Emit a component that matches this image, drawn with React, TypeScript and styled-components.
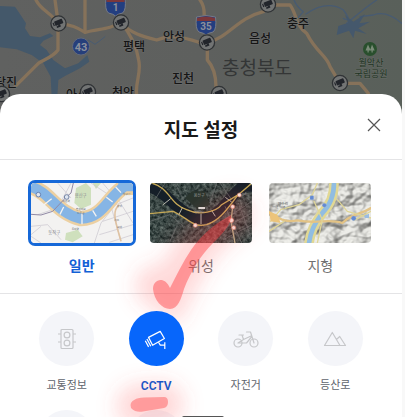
import React, { useState } from "react";
import styled, { createGlobalStyle, css } from "styled-components";

const GlobalStyle = createGlobalStyle`
  * { box-sizing: border-box; }
  html, body, #root { height: 100%; }
  body {
    margin: 0;
    overflow: hidden;
    background: #f8f8f8;
    font-family: Roboto, "Noto Sans CJK KR", sans-serif;
    color: #1a1a1a;
  }
`;

const Screen = styled.main`
  position: relative;
  height: 100%;
  overflow: hidden;
  padding-right: 3px;
`;

const MapArea = styled.div`
  height: 122px;
  background: #5e605f;
  overflow: hidden;

  svg {
    display: block;
    width: 100%;
    height: 100%;
  }
`;

const Sheet = styled.section`
  position: relative;
  min-height: 100%;
  margin-top: -28px;
  background: #fff;
  border-radius: 20px 20px 0 0;
`;

const SheetHeader = styled.header`
  display: grid;
  grid-template-columns: 1fr auto 1fr;
  padding: 19px 16px 14px;
  border-bottom: 1px solid #e4e4e6;
`;

const Title = styled.h1`
  grid-column: 2;
  align-self: end;
  margin: 4px 0 0;
  font-size: 19px;
  line-height: 28px;
  font-weight: 700;
`;

const CloseButton = styled.button`
  justify-self: end;
  width: 24px;
  height: 24px;
  padding: 0;
  border: 0;
  background: none;
  cursor: pointer;

  svg { display: block; }
`;

const ModeGroup = styled.div`
  display: grid;
  grid-template-columns: repeat(3, 1fr);
  padding: 23px 22px 17px;
  border-bottom: 1px solid #e4e4e6;
`;

const HiddenRadio = styled.input`
  position: absolute;
  opacity: 0;
  pointer-events: none;
`;

const ModeOption = styled.label<{ $active: boolean }>`
  display: flex;
  flex-direction: column;
  align-items: center;
  gap: 13px;
  font-size: 14px;
  line-height: 20px;
  font-weight: ${(p) => (p.$active ? 700 : 400)};
  color: ${(p) => (p.$active ? "#1261d6" : "#707070")};
  cursor: pointer;
`;

const Thumb = styled.span<{ $active: boolean }>`
  width: 102px;
  height: 60px;
  border-radius: 4px;
  overflow: hidden;
  ${(p) => p.$active && css`box-shadow: 0 0 0 3px #1668d8;`}

  svg {
    display: block;
    width: 100%;
    height: 100%;
  }
`;

const LayerGrid = styled.div`
  display: grid;
  grid-template-columns: repeat(4, 1fr);
  row-gap: 15px;
  padding: 17px 22px;
`;

const LayerButton = styled.button<{ $active: boolean }>`
  display: flex;
  flex-direction: column;
  align-items: center;
  gap: 11px;
  padding: 0;
  border: 0;
  background: none;
  font-family: inherit;
  font-size: ${(p) => (p.$active ? 12 : 11)}px;
  line-height: 18px;
  font-weight: ${(p) => (p.$active ? 600 : 400)};
  color: ${(p) => (p.$active ? "#1c55c4" : "#5f656d")};
  cursor: pointer;
  ${(p) => p.$active && css`position: relative; z-index: 3;`}
`;

const LayerCircle = styled.span<{ $active: boolean }>`
  display: grid;
  place-items: center;
  width: 55px;
  height: 55px;
  border-radius: 50%;
  background: ${(p) => (p.$active ? "#0766fb" : "#f4f5f9")};
  color: ${(p) => (p.$active ? "#fff" : "#c6c7ca")};
`;

const MarkerOverlay = styled.svg`
  position: absolute;
  top: 66px;
  left: 0;
  z-index: 2;
  pointer-events: none;
`;

const HomeIndicator = styled.div`
  position: absolute;
  z-index: 4;
  bottom: -3px;
  left: 50%;
  width: 42px;
  height: 4px;
  border-radius: 2px;
  background: #555;
  transform: translateX(-50%);
`;

const CameraPin = ({ x, y }: { x: number; y: number }) => (
  <g transform={`translate(${x} ${y})`}>
    <circle r="7.6" fill="#727474" stroke="#303336" strokeWidth="1.3" />
    <g transform="rotate(-22)" fill="#22252b">
      <rect x="-3.6" y="-3.3" width="8.4" height="4.6" rx="0.6" />
      <path d="M-5.4-2.6h1.2v3.4h-1.2zM-1 1h2.2v2.6h-4.2v-1.5h2z" />
    </g>
  </g>
);

const Highway = ({ x, y, n }: { x: number; y: number; n: string }) => (
  <g transform={`translate(${x} ${y})`}>
    <path d="M-9.5-9Q0-12 9.5-9Q11 3 7 6Q2 7 0 9Q-2 7-7 6Q-11 3-9.5-9Z" fill="#233e80" stroke="#777b86" />
    <path d="M-9-8Q0-11 9-8V-5H-9Z" fill="#7b373b" />
    <text y="4" textAnchor="middle" fontSize="10" fontWeight="700" fill="#8c909b">{n}</text>
  </g>
);

const RegionMap = () => (
  <svg viewBox="0 0 402 122" preserveAspectRatio="xMidYMin slice" aria-hidden="true">
    <defs>
      <linearGradient id="land" x1="0" x2="1">
        <stop offset="0" stopColor="#606160" />
        <stop offset=".5" stopColor="#5e605e" />
        <stop offset="1" stopColor="#59605a" />
      </linearGradient>
    </defs>
    <rect width="402" height="122" fill="url(#land)" />
    <g transform="scale(.33333)" fill="none" strokeLinejoin="round" strokeLinecap="round">
      <path d="M0 18L45 20 62 45 78 70 75 85 90 108 120 112 150 100 160 108 130 122 120 135 140 150 160 180 195 205 235 190 262 165 268 185 240 205 195 228 175 240 172 290 155 290 152 230 130 190 95 165 50 148 0 142Z" fill="#44586a" />
      <g stroke="#86725a" strokeWidth="10">
        <path d="M108 0C125 35 160 40 174 72V150C160 170 130 180 115 190L45 260" />
        <path d="M165 0L175 72C215 72 235 85 255 97C295 85 330 90 362 66C390 100 430 110 470 120C520 100 560 115 600 128" />
        <path d="M255 0V97M362 66C390 100 410 140 416 180C425 220 405 245 410 285" />
        <path d="M622 128C690 110 710 55 790 35L805 15H870C890 40 885 75 920 100C950 160 980 165 990 200L1020 250H1080L1105 280" />
        <path d="M600 0Q615 20 612 50M622 128V180Q650 210 648 270" />
      </g>
      <g stroke="#485b72" strokeWidth="4">
        <path d="M882 0Q890 20 910 35L895 52M918 42C950 20 990 5 1030 30Q1060 70 1030 55M1040 70Q1100 20 1130 0M1080 50L1120 45Q1160 30 1205 70" />
        <path d="M265 120L285 133 300 122 315 110" strokeWidth="3" />
      </g>
      <path d="M1015 78L1045 68 1035 45 1060 65 1095 42 1078 70 1110 65 1075 85 1100 102 1065 92 1060 115 1047 92 1010 105Z" fill="#45586c" />
    </g>
    <Highway x={115.5} y={7} n="1" />
    <Highway x={206} y={26} n="35" />
    <circle cx="81" cy="46.5" r="8.5" fill="#263f7b" stroke="#626a7b" />
    <text x="81" y="50.5" textAnchor="middle" fontSize="11" fontWeight="700" fill="#8b909c">43</text>
    <g textAnchor="middle" fontSize="12" fontWeight="500" fill="#151515" stroke="#6c6d6d" strokeWidth="1" paintOrder="stroke">
      <text x="134" y="51">평택</text>
      <text x="174" y="41">안성</text>
      <text x="183" y="83">진천</text>
      <text x="260" y="43">음성</text>
      <text x="298" y="28">충주</text>
      <text x="6" y="87">당진</text>
      <text x="123" y="97">천안</text>
      <text x="77" y="99">아산</text>
    </g>
    <CameraPin x={58.5} y={23.5} />
    <CameraPin x={121} y={22.5} />
    <CameraPin x={207} y={42.5} />
    <CameraPin x={268} y={4.5} />
    <CameraPin x={340} y={83} />
    <CameraPin x={2} y={94} />
    <CameraPin x={88} y={92} />
    <CameraPin x={219} y={94} />
    <text x="257" y="75" textAnchor="middle" fontSize="19" fill="#343636">충청북도</text>
    <circle cx="370" cy="49" r="7" fill="#294f2d" />
    <path d="M368 44.5l-2.5 6h2v2h1.2v-2h2zM372 44.5l-2 6h1.5v2h1.2v-2h2z" fill="#7a8b78" />
    <g textAnchor="middle" fontSize="9" fill="#1e3323" stroke="#656b65" strokeWidth="1" paintOrder="stroke">
      <text x="371" y="66">월악산</text>
      <text x="371" y="77">국립공원</text>
    </g>
  </svg>
);

const RIVER = "M0 12C55 25 75 90 150 107C215 105 230 45 278 12";

const StreetThumb = () => (
  <svg viewBox="0 0 306 180" preserveAspectRatio="xMidYMid slice" aria-hidden="true">
    <rect width="306" height="180" fill="#f3f2f1" />
    <path d="M135 15L165 0 180 15V65L150 78 130 60ZM105 150L140 140 155 160 125 178 102 170ZM185 0H210L195 18Z" fill="#cfe0bd" />
    <g fill="none" stroke="#c9c4cd" strokeWidth="2">
      <path d="M80 0L120 45M120 0L80 75 20 95M0 130L50 125 90 170M180 0L240 40M215 0L245 35M250 70L210 120 190 180M306 45L230 75M306 85L215 115M306 125L205 155M306 155L235 178M240 70L270 175M265 55L306 120M0 160L30 180M30 130L0 155" />
    </g>
    <path d={RIVER} fill="none" stroke="#ecd0a2" strokeWidth="46" />
    <path d="M265 17H306" fill="none" stroke="#ecd0a2" strokeWidth="38" />
    <path d={RIVER} fill="none" stroke="#86b5e5" strokeWidth="31" />
    <path d="M262 12H306" fill="none" stroke="#86b5e5" strokeWidth="26" />
    <path d="M38 66L62 47M87 94L98 72M153 124V92M196 100L185 82M245 57L226 43M270 29L254 12" stroke="#f3f2f1" strokeWidth="4" />
    <path d="M127 0L120 30 105 43 65 85 30 96 0 94" fill="none" stroke="#9089a5" strokeWidth="3" />
    <path d="M265 65C240 85 255 120 270 175" fill="none" stroke="#dfc3a3" strokeWidth="5" />
    <circle cx="107" cy="42" r="7" fill="#dfe6f1" stroke="#7585a6" strokeWidth="3" />
    <circle cx="22" cy="35" r="7" fill="#dfe6f1" stroke="#6681b2" strokeWidth="3" />
    <g fill="#8c8c90" fontSize="13" fontWeight="400">
      <text x="131" y="42">용산구</text>
      <text x="52" y="154">동작구</text>
    </g>
    <g fill="#66696e" fontSize="8" fontWeight="400">
      <text x="135" y="82">한강대교</text><text x="138" y="94">노들섬</text>
      <text x="122" y="142">동작역</text><text x="258" y="72">강남</text>
      <text x="250" y="114">서초</text><text x="258" y="134">교대</text>
      <text x="276" y="37">압구정</text><text x="95" y="58">이촌역</text>
    </g>
  </svg>
);

const SatelliteThumb = () => (
  <svg viewBox="0 0 306 180" preserveAspectRatio="xMidYMid slice" aria-hidden="true">
    <defs>
      <filter id="aerial" x="0" y="0" width="100%" height="100%" colorInterpolationFilters="sRGB">
        <feTurbulence type="fractalNoise" baseFrequency=".1" numOctaves="4" seed="7" />
        <feColorMatrix values=".5 0 0 0 -.02  .5 0 0 0 .03  .48 0 0 0 .03  0 0 0 0 1" />
      </filter>
    </defs>
    <rect width="306" height="180" filter="url(#aerial)" />
    <path d="M105 45L125 25H165L180 65 145 80Z" fill="#29352e" />
    <path d={RIVER} fill="none" stroke="#151f28" strokeWidth="34" />
    <path d="M262 12H306" stroke="#151f28" strokeWidth="28" />
    <g fill="none" stroke="#6d7272" strokeWidth="2">
      <path d="M45 0L15 50M75 0L100 50M200 0L180 60M0 115L60 95 100 130M80 130L60 175M210 0L245 50M215 115L306 55M210 140L306 90M220 170L306 125M225 70L275 180M265 60L306 170" />
      <path d="M38 66L62 47M87 94L98 72M153 124V92M196 100L185 82M245 57L226 43" stroke="#b7b8ad" strokeWidth="3" />
    </g>
    <g fill="none" stroke="#c5a957" strokeWidth="4">
      <path d="M5 0C60 15 60 65 110 80C150 100 200 85 215 65L265 35 306 0" />
      <path d="M0 92L70 85C120 110 130 135 170 125C215 110 240 65 265 35" />
      <path d="M248 70L243 115 255 180" stroke="#b8ad87" />
    </g>
    <path d="M145 75H165" stroke="#dde0dc" strokeWidth="6" />
    <g fill="#f6eee6" stroke="#cf806b" strokeWidth="2">
      <circle cx="268" cy="36" r="6" /><circle cx="248" cy="71" r="6" /><circle cx="244" cy="112" r="7" /><circle cx="251" cy="134" r="6" /><circle cx="136" cy="127" r="6" />
    </g>
    <g fontSize="12" fill="#9b9f9c">
      <text x="131" y="42">용산구</text><text x="77" y="99" fontSize="8">한강</text><text x="134" y="90" fontSize="8">한강대교</text><text x="275" y="36" fontSize="8">압구정</text>
    </g>
  </svg>
);

const TerrainThumb = () => (
  <svg viewBox="0 0 306 180" preserveAspectRatio="xMidYMid slice" aria-hidden="true">
    <defs>
      <filter id="relief" x="0" y="0" width="100%" height="100%" colorInterpolationFilters="sRGB">
        <feTurbulence type="fractalNoise" baseFrequency=".02 .024" numOctaves="3" seed="12" />
        <feDiffuseLighting surfaceScale="22" lightingColor="#dededb" diffuseConstant="1.1">
          <feDistantLight azimuth="225" elevation="58" />
        </feDiffuseLighting>
        <feColorMatrix values=".6 0 0 0 .36  0 .6 0 0 .36  0 0 .6 0 .35  0 0 0 1 0" />
      </filter>
    </defs>
    <rect width="306" height="180" filter="url(#relief)" />
    <g fill="none" strokeLinecap="round" strokeLinejoin="round">
      <path d="M195 0C195 45 180 70 160 90C135 125 125 145 120 180" stroke="#e1d894" strokeWidth="29" />
      <path d="M195 0C195 45 180 70 160 90C135 125 125 145 120 180" stroke="#91bde1" strokeWidth="14" />
      <path d="M0 88C30 105 45 120 85 112C145 125 175 105 220 120C250 90 275 95 306 75" stroke="#e3c385" strokeWidth="7" />
      <path d="M5 115L35 80 90 65 130 35 145 0M135 55L160 110 145 180M205 50L235 85 306 105M0 145L45 115M255 112L306 85" stroke="#dfd597" strokeWidth="4" />
    </g>
    <path d="M0 85L25 95 35 120 5 115Z" fill="#ecc47a" />
    <path d="M285 98L300 92V105H288Z" fill="#9bbce1" />
    <g fill="#6289d3" stroke="#9bb2d9">
      <circle cx="254" cy="106" r="7" /><circle cx="166" cy="67" r="6" /><rect x="123" y="38" width="11" height="12" rx="3" />
    </g>
    <g fontSize="11" fill="#575d61"><text x="27" y="66">양수리</text><text x="8" y="74" fontSize="7">양평군 양서면</text></g>
  </svg>
);

const TrafficIcon = () => (
  <svg width="20" height="22" viewBox="0 0 20 22" fill="none" stroke="currentColor" strokeWidth="1.2" aria-hidden="true">
    <rect x="4" y="1.5" width="12" height="19" rx="1" />
    <circle cx="10" cy="7" r="2.9" /><circle cx="10" cy="15" r="2.9" />
    <path d="M1 6h3M1 14h3M16 6h3M16 14h3" />
  </svg>
);

const CctvIcon = () => (
  <svg width="24" height="24" viewBox="0 0 24 24" fill="none" stroke="currentColor" strokeWidth="1.2" strokeLinejoin="round" aria-hidden="true">
    <path d="M4.5 10.4L16.2 4.4 20.4 11.5 8.6 18.3ZM2.9 12L6.8 19.2M1.3 13.8L4.6 19.9" />
    <path d="M14.5 15.2L16.3 18.1H20.8M20.8 15.2V22" />
  </svg>
);

const BikeIcon = () => (
  <svg width="28" height="22" viewBox="0 0 28 22" fill="none" stroke="currentColor" strokeWidth="1.2" strokeLinecap="round" strokeLinejoin="round" aria-hidden="true">
    <circle cx="6" cy="15" r="4" /><circle cx="22" cy="15" r="4" />
    <path d="M6 15L11.5 11.5 10 7M7 7H11.5M11.5 11.5L19 8M19.5 9L14.5 15H6M22 15L18.5 4H14.5" />
  </svg>
);

const MountainIcon = () => (
  <svg width="24" height="20" viewBox="0 0 24 20" fill="none" stroke="currentColor" strokeWidth="1.2" strokeLinejoin="round" aria-hidden="true">
    <path d="M1.5 16.5L9.3 3.5 17 16.5ZM13.5 10.5L16.7 7.5 22.5 16.5H17" />
  </svg>
);

const MarkerStrokes = () => (
  <MarkerOverlay width="300" height="300" viewBox="0 160 300 300" aria-hidden="true">
    <defs>
      <filter id="glow" x="-50%" y="-50%" width="200%" height="200%">
        <feGaussianBlur stdDeviation="10" />
      </filter>
    </defs>
    <g filter="url(#glow)" fill="none" stroke="#ff5050" strokeLinecap="round" strokeOpacity=".22">
      <path d="M232 215C200 235 185 265 170 295L156 286" strokeWidth="42" />
      <path d="M138 406L162 404" strokeWidth="44" />
    </g>
    <path d="M231 215C216 223 202 234 191 250C183 262 176 276 170 288C164 275 153 280 153 289C154 300 162 309 170 309C178 309 181 299 184 289C191 271 201 255 213 243C221 235 232 225 231 215Z" fill="#ff3c3f" fillOpacity=".44" />
    <path d="M135 399.5Q137 398 144 397.5L164 397Q168 397 168 402Q168 407 164 408L143 411.5Q136 413 131 408Q129 402 135 399.5Z" fill="#ff3c3f" fillOpacity=".4" />
  </MarkerOverlay>
);

const modes = [
  { id: "street", label: "일반", Picture: StreetThumb },
  { id: "satellite", label: "위성", Picture: SatelliteThumb },
  { id: "terrain", label: "지형", Picture: TerrainThumb },
];

const layers = [
  { id: "traffic", label: "교통정보", Icon: TrafficIcon },
  { id: "cctv", label: "CCTV", Icon: CctvIcon },
  { id: "bike", label: "자전거", Icon: BikeIcon },
  { id: "hiking", label: "등산로", Icon: MountainIcon },
];

const moreLayers = ["거리뷰", "지적편집도"];

export default function App() {
  const [mode, setMode] = useState("street");
  const [layer, setLayer] = useState("cctv");

  return (
    <>
      <GlobalStyle />
      <Screen>
        <MapArea><RegionMap /></MapArea>
        <Sheet>
          <SheetHeader>
            <Title>지도 설정</Title>
            <CloseButton type="button" aria-label="닫기">
              <svg width="24" height="24" viewBox="0 0 24 24" fill="none" stroke="#555" strokeWidth="1.2">
                <path d="M6 6L18 18M18 6L6 18" />
              </svg>
            </CloseButton>
          </SheetHeader>
          <ModeGroup role="radiogroup" aria-label="지도 종류">
            {modes.map(({ id, label, Picture }) => (
              <ModeOption key={id} $active={mode === id}>
                <HiddenRadio type="radio" name="mode" checked={mode === id} onChange={() => setMode(id)} />
                <Thumb $active={mode === id}><Picture /></Thumb>
                {label}
              </ModeOption>
            ))}
          </ModeGroup>
          <LayerGrid>
            {layers.map(({ id, label, Icon }) => (
              <LayerButton key={id} type="button" $active={layer === id} aria-pressed={layer === id} onClick={() => setLayer(id)}>
                <LayerCircle $active={layer === id}><Icon /></LayerCircle>
                {label}
              </LayerButton>
            ))}
            {moreLayers.map((label) => (
              <LayerButton key={label} type="button" $active={false} aria-label={label}>
                <LayerCircle $active={false} />
              </LayerButton>
            ))}
          </LayerGrid>
          <MarkerStrokes />
        </Sheet>
        <HomeIndicator />
      </Screen>
    </>
  );
}
